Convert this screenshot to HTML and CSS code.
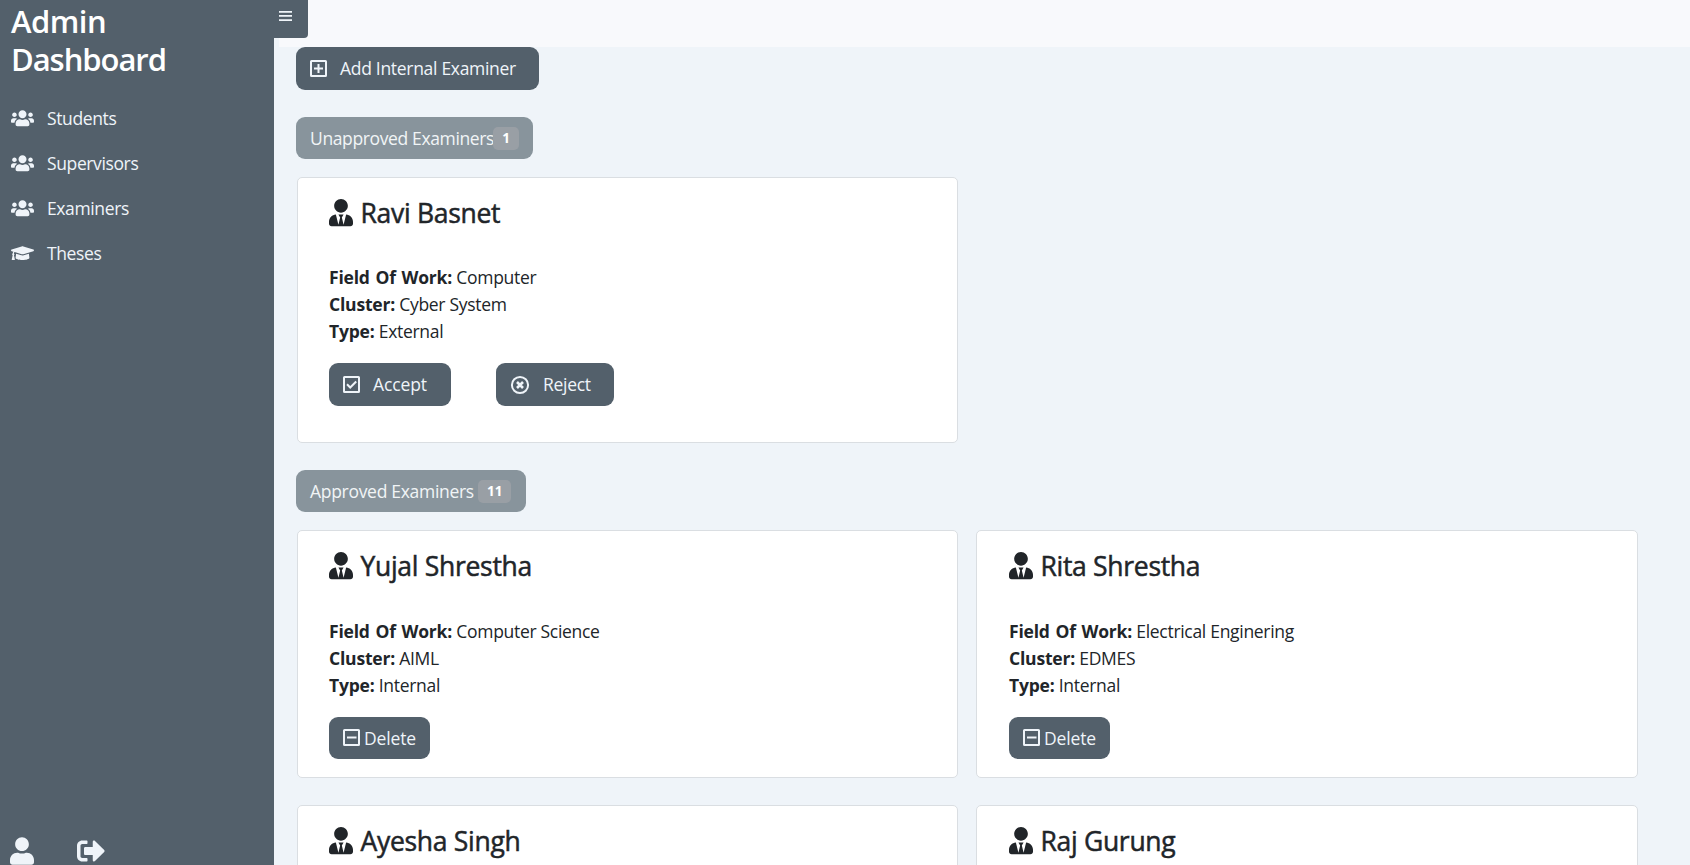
FILE: index.html
```html
<!DOCTYPE html>
<html lang="en">
<head>
<meta charset="utf-8">
<title>Admin Dashboard</title>
<link rel="stylesheet" href="styles.css">
</head>
<body>
<svg class="sprite" aria-hidden="true">
  <symbol id="users" viewBox="0 0 640 512"><path d="M96 224c35.300 0 64-28.700 64-64s-28.700-64-64-64-64 28.700-64 64 28.700 64 64 64zm448 0c35.300 0 64-28.700 64-64s-28.700-64-64-64-64 28.700-64 64 28.700 64 64 64zm32 32h-64c-17.600 0-33.500 7.100-45.100 18.600 40.300 22.100 68.900 62 75.100 109.400h66c17.700 0 32-14.300 32-32v-32c0-35.300-28.700-64-64-64zm-256 0c61.900 0 112-50.100 112-112S381.900 32 320 32 208 82.100 208 144s50.100 112 112 112zm76.800 32h-8.300c-20.800 10-43.900 16-68.500 16s-47.600-6-68.500-16h-8.300C179.600 288 128 339.600 128 403.200V432c0 26.500 21.500 48 48 48h288c26.500 0 48-21.500 48-48v-28.800c0-63.600-51.600-115.200-115.200-115.200zm-223.700-13.400C161.500 263.100 145.600 256 128 256H64c-35.300 0-64 28.700-64 64v32c0 17.700 14.300 32 32 32h65.900c6.300-47.400 34.900-87.300 75.200-109.400z"/></symbol>
  <symbol id="cap" viewBox="0 0 640 512"><path d="M622.340 153.200L343.400 67.500c-15.200-4.670-31.600-4.670-46.790 0L17.660 153.200c-23.540 7.230-23.540 38.360 0 45.590l48.630 14.940c-10.670 13.190-17.230 29.280-17.880 46.900C38.780 266.150 32 276.110 32 288c0 10.780 5.680 19.850 13.860 25.650L20.330 428.530C18.110 438.520 25.710 448 35.940 448h56.110c10.240 0 17.840-9.480 15.620-19.470L82.140 313.650C90.320 307.850 96 298.780 96 288c0-11.570-6.470-21.250-15.660-26.870.76-15.020 8.440-28.300 20.690-36.720L296.600 284.500c9.060 2.780 26.440 6.250 46.790 0l278.950-85.700c23.550-7.240 23.550-38.360 0-45.600zM352.790 315.090c-28.530 8.760-52.840 3.920-65.590 0l-145.020-44.550L128 384c0 35.350 85.960 64 192 64s192-28.650 192-64l-14.180-113.470-145.030 44.560z"/></symbol>
  <symbol id="tie" viewBox="0 0 448 512"><path d="M224 256c70.700 0 128-57.300 128-128S294.700 0 224 0 96 57.300 96 128s57.300 128 128 128zm95.800 32.600L272 480l-32-136 32-56h-96l32 56-32 136-47.800-191.400C56.900 292 0 350.300 0 422.400V464c0 26.500 21.500 48 48 48h352c26.500 0 48-21.500 48-48v-41.600c0-72.100-56.900-130.400-128.200-133.800z"/></symbol>
  <symbol id="user" viewBox="0 0 448 512"><path d="M224 256c70.700 0 128-57.300 128-128S294.700 0 224 0 96 57.300 96 128s57.300 128 128 128zm89.600 32h-16.700c-22.200 10.200-46.900 16-72.900 16s-50.600-5.800-72.900-16h-16.700C60.200 288 0 348.200 0 422.400V464c0 26.500 21.500 48 48 48h352c26.500 0 48-21.500 48-48v-41.600c0-74.200-60.200-134.400-134.400-134.400z"/></symbol>
  <symbol id="signout" viewBox="0 0 512 512"><path d="M497 273L329 441c-15 15-41 4.500-41-17v-96H152c-13.300 0-24-10.700-24-24v-96c0-13.300 10.700-24 24-24h136V88c0-21.400 25.900-32 41-17l168 168c9.300 9.400 9.300 24.600 0 34zM192 436v-40c0-6.600-5.400-12-12-12H96c-17.700 0-32-14.300-32-32V160c0-17.700 14.300-32 32-32h84c6.600 0 12-5.400 12-12V76c0-6.600-5.400-12-12-12H96c-53 0-96 43-96 96v192c0 53 43 96 96 96h84c6.600 0 12-5.400 12-12z"/></symbol>
  <symbol id="plus" viewBox="0 0 18 18"><path class="line" d="M1.500 1h14q.5 0 .5.500v14q0 .5-.5.500h-14q-.5 0-.5-.5v-14q0-.5.500-.5zM8.500 4v9M4 8.500h9"/></symbol>
  <symbol id="check" viewBox="0 0 18 18"><path class="line" d="M1.500 1h14q.5 0 .5.500v14q0 .5-.5.500h-14q-.5 0-.5-.5v-14q0-.5.500-.5zM4 8.300l3.200 3.200 6-6"/></symbol>
  <symbol id="minus" viewBox="0 0 18 18"><path class="line" d="M1.500 1h14q.5 0 .5.500v14q0 .5-.5.500h-14q-.5 0-.5-.5v-14q0-.5.500-.5zM4 8.500h9.500"/></symbol>
  <symbol id="reject" viewBox="0 0 20 20"><circle class="line" cx="10" cy="10" r="8.100"/><path class="line cross" d="M7 7l6 6M13 7l-6 6"/></symbol>
</svg>
<div class="app">
  <aside class="sidebar">
    <h1 class="brand"><span class="brand-top">Admin</span><br>Dashboard</h1>
    <nav class="nav">
      <a class="nav-item"><svg class="nav-icon"><use href="#users"/></svg><span>Students</span></a>
      <a class="nav-item"><svg class="nav-icon"><use href="#users"/></svg><span>Supervisors</span></a>
      <a class="nav-item"><svg class="nav-icon"><use href="#users"/></svg><span>Examiners</span></a>
      <a class="nav-item"><svg class="nav-icon"><use href="#cap"/></svg><span>Theses</span></a>
    </nav>
    <div class="account">
      <svg class="account-user"><use href="#user"/></svg>
      <svg class="account-out"><use href="#signout"/></svg>
    </div>
  </aside>
  <main class="main">
    <header class="topbar">
      <button class="toggle" aria-label="Toggle menu"><svg width="13" height="10" viewBox="0 0 13 10"><path d="M0 0h13v1.700H0zM0 4.100h13v1.700H0zM0 8.300h13V10H0z"/></svg></button>
    </header>
    <div class="content">
      <button class="btn btn-add"><svg class="btn-icon"><use href="#plus"/></svg><span>Add Internal Examiner</span></button>

      <div class="pill pill-unapproved"><span class="pill-text">Unapproved Examiners</span><span class="count">1</span></div>
      <section class="grid">
        <article class="card card-tall">
          <h2 class="name"><svg class="name-icon"><use href="#tie"/></svg><span>Ravi Basnet</span></h2>
          <p class="facts"><b>Field Of Work:</b> Computer<br><b>Cluster:</b> Cyber System<br><b>Type:</b> External</p>
          <div class="actions">
            <button class="btn btn-accept"><svg class="btn-icon"><use href="#check"/></svg><span>Accept</span></button>
            <button class="btn btn-reject"><svg class="btn-icon round"><use href="#reject"/></svg><span>Reject</span></button>
          </div>
        </article>
      </section>

      <div class="pill pill-approved"><span class="pill-text">Approved Examiners</span><span class="count">11</span></div>
      <section class="grid">
        <article class="card">
          <h2 class="name"><svg class="name-icon"><use href="#tie"/></svg><span>Yujal Shrestha</span></h2>
          <p class="facts"><b>Field Of Work:</b> Computer Science<br><b>Cluster:</b> AIML<br><b>Type:</b> Internal</p>
          <div class="actions"><button class="btn btn-delete"><svg class="btn-icon"><use href="#minus"/></svg><span>Delete</span></button></div>
        </article>
        <article class="card">
          <h2 class="name"><svg class="name-icon"><use href="#tie"/></svg><span>Rita Shrestha</span></h2>
          <p class="facts"><b>Field Of Work:</b> Electrical Enginering<br><b>Cluster:</b> EDMES<br><b>Type:</b> Internal</p>
          <div class="actions"><button class="btn btn-delete"><svg class="btn-icon"><use href="#minus"/></svg><span>Delete</span></button></div>
        </article>
        <article class="card">
          <h2 class="name"><svg class="name-icon"><use href="#tie"/></svg><span>Ayesha Singh</span></h2>
        </article>
        <article class="card">
          <h2 class="name"><svg class="name-icon"><use href="#tie"/></svg><span>Raj Gurung</span></h2>
        </article>
      </section>
    </div>
  </main>
</div>
</body>
</html>
```
FILE: styles.css
```css
* { box-sizing: border-box; }
body {
  margin: 0;
  height: 865px;
  overflow: hidden;
  background: #eff4f9;
  color: #212529;
  font: 400 17.5px/27px "Segoe UI", "Open Sans", "Noto Sans", sans-serif;
  letter-spacing: -0.3px;
  white-space: nowrap;
}
svg { display: block; flex: none; fill: currentColor; }
.sprite { position: absolute; width: 0; height: 0; }
.line { fill: none; stroke: currentColor; stroke-width: 2; }
.cross { stroke-width: 2.6; }
.app { display: flex; height: 865px; overflow: hidden; }

.sidebar {
  flex: none;
  width: 274px;
  height: 865px;
  padding: 2px 10px 0 11px;
  display: flex;
  flex-direction: column;
  background: #53606b;
  color: #eff4f9;
}
.brand {
  margin: 0;
  color: #fff;
  font-size: 31px;
  font-weight: 600;
  line-height: 38px;
  letter-spacing: -1.05px;
}
.brand-top { letter-spacing: -0.5px; }
.nav { margin-top: 18px; letter-spacing: -0.38px; }
.nav-item { display: flex; align-items: center; height: 45px; gap: 13px; }
.nav-icon { width: 23px; height: 18.4px; }
.account { display: flex; align-items: center; gap: 43px; margin: auto 0 0 -1px; }
.account-user { width: 24px; height: 28px; }
.account-out { width: 28px; height: 28px; }

.main { flex: 1; min-width: 0; }
.topbar {
  height: 47px;
  background: linear-gradient(90deg, #eff4f9 5px, #f8f9fc 5px);
}
.toggle {
  display: block;
  width: 34px;
  height: 38px;
  padding: 11px 0 0 5px;
  border: 0;
  border-radius: 0 0 4px 0;
  background: #53606b;
  color: #eff4f9;
}
.toggle svg { margin-bottom: 17px; }
.content { padding-left: 22px; }

.btn {
  display: flex;
  align-items: center;
  height: 43px;
  padding: 0 0 0 14px;
  border: 0;
  border-radius: 9px;
  background: #53606b;
  color: #eff4f9;
  font: inherit;
  letter-spacing: inherit;
}
.btn-icon { width: 18px; height: 18px; margin-right: 12px; }
.btn-icon.round { width: 20px; height: 20px; margin: 0 13px 0 0; }
.btn-add { width: 243px; }
.btn-accept { width: 122px; letter-spacing: -0.1px; }
.btn-reject { width: 118px; }
.btn-delete { width: 101px; height: 42px; letter-spacing: -0.15px; }
.btn-delete .btn-icon { margin-right: 3px; }

.pill {
  display: flex;
  align-items: center;
  height: 42px;
  margin: 27px 0 18px;
  padding-left: 14px;
  border-radius: 9px;
  background: #88949c;
  color: #f1f4f6;
}
.pill-unapproved { width: 237px; }
.pill-unapproved .pill-text { width: 183px; letter-spacing: -0.37px; }
.pill-approved { width: 230px; }
.pill-approved .pill-text { width: 168px; }
.count {
  height: 23px;
  padding: 0 9px;
  border-radius: 5px;
  background: #999fa5;
  color: #fff;
  font-size: 13.5px;
  font-weight: 700;
  line-height: 23px;
  letter-spacing: 0;
}
.pill-unapproved .count { padding: 0 9.200px; }

.grid {
  display: grid;
  grid-template-columns: 661px 662px;
  gap: 27px 18px;
  margin-left: 1px;
}
.card {
  height: 248px;
  padding: 16px 31px 0;
  border: 1px solid #dadee2;
  border-radius: 5px;
  background: #fff;
}
.card:nth-child(even) { padding-left: 32px; }
.card-tall { height: 266px; }
.name {
  display: flex;
  align-items: center;
  gap: 7.500px;
  height: 38px;
  margin: 0;
  font-size: 26.5px;
  font-weight: 500;
  letter-spacing: -0.3px;
  -webkit-text-stroke: 0.5px currentColor;
}
.name-icon { width: 24px; height: 27.4px; }
.facts { margin: 33px 0 18px; }
.card-tall .facts { margin-top: 32px; }
.facts b { font-weight: 700; letter-spacing: -0.2px; word-spacing: 1.4px; }
.actions { display: flex; gap: 45px; }
```
